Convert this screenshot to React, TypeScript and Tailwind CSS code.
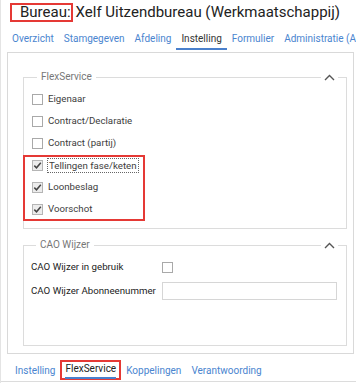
import { ReactNode } from 'react'

const topTabs = ['Overzicht', 'Stamgegeven', 'Afdeling', 'Instelling', 'Formulier', 'Administratie (Administratie)']
const bottomTabs = ['Instelling', 'FlexService', 'Koppelingen', 'Verantwoording']

function Box({ checked = false }: { checked?: boolean }) {
  return (
    <span
      className={`flex h-[11px] w-[11px] shrink-0 items-center justify-center border ${
        checked ? 'border-[#b5b5b5] bg-[#ececec]' : 'border-[#a9a9a9] bg-white'
      }`}
    >
      {checked ? (
        <svg width="9" height="9" viewBox="0 0 9 9" fill="none">
          <path d="M1.3 4.6 L3.5 6.8 L7.8 1.8" stroke="#444" strokeWidth="1.5" />
        </svg>
      ) : null}
    </span>
  )
}

function CheckRow({ label, checked, focus }: { label: string; checked?: boolean; focus?: boolean }) {
  return (
    <div className="flex h-[22px] items-center gap-[4px]">
      <Box checked={checked} />
      <span className={focus ? 'border border-dotted border-[#666] px-[1px] leading-[13px]' : 'px-[1px]'}>
        {label}
      </span>
    </div>
  )
}

function Group({ title, children, className }: { title: string; children: ReactNode; className?: string }) {
  return (
    <div className={`relative border border-[#dcdcdc] ${className ?? ''}`}>
      <div className="-mt-[8px] flex h-[14px] items-center justify-between pl-[5px] pr-[8px]">
        <span className="bg-white px-[4px] text-[10px] leading-[14px] text-[#777]">{title}</span>
        <span className="flex h-[14px] items-center bg-white px-[3px]">
          <svg width="11" height="7" viewBox="0 0 11 7" fill="none">
            <path d="M1 6 L5.5 1.5 L10 6" stroke="#555" strokeWidth="1.4" />
          </svg>
        </span>
      </div>
      {children}
    </div>
  )
}

export default function App() {
  return (
    <div className="h-[383px] w-[356px] overflow-hidden border-l border-[#e4e4e4] bg-white font-['Roboto',sans-serif] text-[9.7px] text-[#3d3d3d]">
      <div className="flex h-[25px] items-start pl-[9px] pt-[3px] text-[15px] leading-[19px] text-[#222]">
        <span className="border-2 border-[#e53935] pl-[8px] leading-[15px]">Bureau:</span>
        <span className="ml-[3px] whitespace-nowrap">Xelf Uitzendbureau (Werkmaatschappij)</span>
      </div>

      <div className="mt-[4px] flex h-[21px] overflow-hidden whitespace-nowrap pl-[6px] text-[10px]">
        {topTabs.map((t) => (
          <span
            key={t}
            className={`flex items-center border-b-2 px-[5px] ${
              t === 'Instelling' ? 'border-[#4a80cc] text-[#333]' : 'border-transparent text-[#4a85cf]'
            }`}
          >
            {t}
          </span>
        ))}
      </div>

      <div className="ml-[6px] mt-[2px] w-[347px] border border-[#d9d9d9] pb-[7px] pl-[15px] pr-[6px] pt-[24px]">
        <Group title="FlexService" className="h-[152px] pl-[8px]">
          <div className="mt-[4px]">
            <CheckRow label="Eigenaar" />
            <CheckRow label="Contract/Declaratie" />
            <CheckRow label="Contract (partij)" />
            <CheckRow label="Tellingen fase/keten" checked focus />
            <CheckRow label="Loonbeslag" checked />
            <CheckRow label="Voorschot" checked />
          </div>
          <div className="pointer-events-none absolute left-[-1px] top-[77px] h-[66px] w-[122px] border-2 border-[#e53935]" />
        </Group>

        <Group title="CAO Wijzer" className="mt-[16px] h-[101px] pl-[7px] text-[#222]">
          <div className="mt-[4px] flex h-[22px] items-center">
            <span className="w-[131px]">CAO Wijzer in gebruik</span>
            <Box />
          </div>
          <div className="mt-[2px] flex h-[22px] items-center">
            <span className="w-[131px] whitespace-nowrap">CAO Wijzer Abonneenummer</span>
            <span className="h-[18px] w-[175px] border border-[#d6d6d6] bg-white" />
          </div>
        </Group>
      </div>

      <div className="mt-[6px] flex h-[22px] items-start border-b border-[#dcdcdc] pl-[9px] text-[10px]">
        {bottomTabs.map((t) =>
          t === 'FlexService' ? (
            <span key={t} className="flex h-[20px] items-center border-2 border-[#e53935] px-[3px]">
              <span className="border-b-2 border-[#4a80cc] leading-[16px] text-[#222]">{t}</span>
            </span>
          ) : (
            <span key={t} className="flex h-[20px] items-center px-[5px] text-[#4a85cf]">
              {t}
            </span>
          ),
        )}
      </div>
    </div>
  )
}
